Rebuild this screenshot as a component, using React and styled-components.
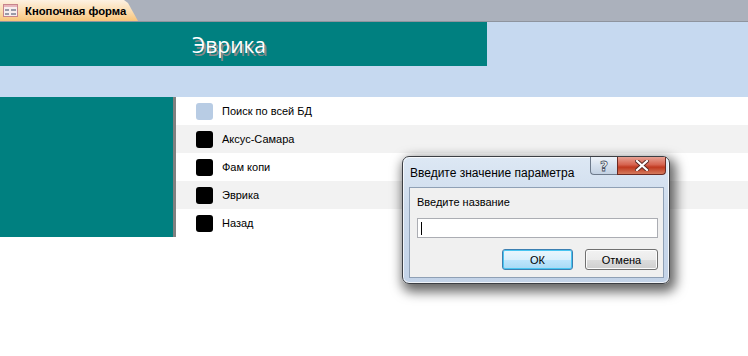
import React from 'react';
import styled, { createGlobalStyle } from 'styled-components';

const GlobalStyle = createGlobalStyle`
  html, body {
    margin: 0;
    padding: 0;
    background: #ffffff;
  }
  body {
    font-family: 'Liberation Sans', Arial, sans-serif;
    width: 748px;
    height: 356px;
    overflow: hidden;
  }
`;

const menuItems = [
  { label: 'Поиск по всей БД', light: true },
  { label: 'Аксус-Самара' },
  { label: 'Фам копи' },
  { label: 'Эврика' },
  { label: 'Назад' }
];

const FormIcon = () => (
  <svg width="15" height="13" viewBox="0 0 15 13">
    <rect x="0.5" y="0.5" width="14" height="12" fill="#f7eeee" stroke="#c8848c" />
    <rect x="1" y="1" width="13" height="2" fill="#e7b6bc" />
    <rect x="2" y="5" width="4" height="2" fill="#9a9aa8" />
    <rect x="8" y="5" width="5" height="2" fill="#9a9aa8" />
    <rect x="2" y="9" width="4" height="2" fill="#9a9aa8" />
    <rect x="8" y="9" width="5" height="2" fill="#9a9aa8" />
  </svg>
);

const App = () => {
  return (
    <Page>
      <GlobalStyle />
      <TabBar>
        <Tab>
          <FormIcon />
          <TabLabel>Кнопочная форма</TabLabel>
        </Tab>
      </TabBar>
      <HeaderArea>
        <TitleBand>
          <Title>Эврика</Title>
        </TitleBand>
        <Band />
      </HeaderArea>
      <Body>
        <SidePanel />
        <MenuList>
          {menuItems.map((item, i) => (
            <MenuRow key={item.label} $alt={i % 2 === 1}>
              <MenuButton $light={item.light} />
              <MenuText>{item.label}</MenuText>
            </MenuRow>
          ))}
        </MenuList>
      </Body>

      <Dialog>
        <DialogTitleBar>
          <DialogTitle>Введите значение параметра</DialogTitle>
          <Caption>
            <HelpButton>?</HelpButton>
            <CloseButton>
              <svg width="14" height="11" viewBox="0 0 14 11">
                <path d="M2 1 L12 10 M12 1 L2 10" stroke="#5a2a24" strokeWidth="4" strokeLinecap="square" />
                <path d="M2 1 L12 10 M12 1 L2 10" stroke="#ffffff" strokeWidth="2.2" strokeLinecap="square" />
              </svg>
            </CloseButton>
          </Caption>
        </DialogTitleBar>
        <Client>
          <Prompt>Введите название</Prompt>
          <Field>
            <Caret />
          </Field>
          <ButtonRow>
            <PushButton $focused>ОК</PushButton>
            <PushButton>Отмена</PushButton>
          </ButtonRow>
        </Client>
      </Dialog>
    </Page>
  );
};

const Page = styled.div`
  position: relative;
  width: 748px;
  height: 356px;
  display: flex;
  flex-direction: column;
`;

const TabBar = styled.div`
  height: 21px;
  background: #abb1bc;
  border-bottom: 1px solid #8e949e;
  display: flex;
  align-items: flex-end;
`;

const Tab = styled.div`
  height: 21px;
  width: 138px;
  box-sizing: border-box;
  padding-left: 3px;
  display: flex;
  align-items: center;
  gap: 7px;
  background: linear-gradient(#fdf1e2 0%, #fbdcae 55%, #f8c47a 100%);
  clip-path: polygon(0 0, 124px 0, 128px 3px, 138px 100%, 0 100%);
`;

const TabLabel = styled.span`
  font-family: 'Liberation Sans', Tahoma, sans-serif;
  font-size: 11.3px;
  font-weight: bold;
  color: #000;
  white-space: nowrap;
`;

const HeaderArea = styled.div`
  background: #c6d9f0;
  display: flex;
  flex-direction: column;
`;

const TitleBand = styled.div`
  width: 487px;
  height: 44px;
  background: #008080;
  box-sizing: border-box;
  padding-left: 192px;
  display: flex;
  align-items: center;
`;

const Title = styled.h1`
  margin: 2px 0 0 0;
  font-family: 'Open Sans', 'Noto Sans', sans-serif;
  font-weight: normal;
  font-size: 21px;
  color: #ffffff;
  text-shadow: 2px 3px 0 #8a8a8a;
`;

const Band = styled.div`
  height: 31px;
`;

const Body = styled.div`
  display: flex;
  align-items: flex-start;
`;

const SidePanel = styled.div`
  width: 173px;
  height: 140px;
  background: #008080;
  border-right: 3px solid #808080;
`;

const MenuList = styled.div`
  flex: 1;
  display: flex;
  flex-direction: column;
`;

const MenuRow = styled.div`
  height: 28px;
  display: flex;
  align-items: center;
  padding-left: 20px;
  gap: 9px;
  background: ${p => (p.$alt ? '#f2f2f2' : '#ffffff')};
`;

const MenuButton = styled.div`
  width: 17px;
  height: 17px;
  border-radius: 3px;
  background: ${p => (p.$light ? '#b8cce4' : '#000000')};
`;

const MenuText = styled.span`
  font-family: 'Liberation Sans', Tahoma, sans-serif;
  font-size: 11px;
  color: #000;
`;

const Dialog = styled.div`
  position: absolute;
  left: 402px;
  top: 156px;
  width: 268px;
  height: 128px;
  box-sizing: border-box;
  border: 1px solid #3c3f44;
  border-radius: 7px;
  background: linear-gradient(180deg, #dde8f4 0%, #cddbec 40%, #c3d3e8 100%);
  box-shadow: inset 0 0 0 1px rgba(255, 255, 255, 0.75), 3px 5px 12px 3px rgba(0, 0, 0, 0.6);
  padding: 0 5px 5px 6px;
  display: flex;
  flex-direction: column;
`;

const DialogTitleBar = styled.div`
  height: 30px;
  display: flex;
  justify-content: space-between;
  align-items: flex-start;
`;

const DialogTitle = styled.span`
  font-family: 'Liberation Sans', 'Segoe UI', sans-serif;
  font-size: 12px;
  color: #000;
  margin-top: 9px;
  margin-left: 1px;
  white-space: nowrap;
`;

const Caption = styled.div`
  display: flex;
  margin-right: -2px;
`;

const HelpButton = styled.div`
  width: 27px;
  height: 18px;
  box-sizing: border-box;
  border: 1px solid #6d7a8b;
  border-right: none;
  border-top: none;
  border-radius: 0 0 0 4px;
  background: linear-gradient(#eef3f9 0%, #d6e1ee 50%, #c3d1e2 100%);
  color: #ffffff;
  font-family: 'DejaVu Sans', sans-serif;
  font-size: 14px;
  font-weight: bold;
  text-align: center;
  line-height: 18px;
  -webkit-text-stroke: 0.8px #4b5566;
`;

const CloseButton = styled.div`
  width: 49px;
  height: 18px;
  box-sizing: border-box;
  border: 1px solid #6b2a22;
  border-top: none;
  border-radius: 0 0 4px 0;
  background: linear-gradient(#e8a294 0%, #d6634f 45%, #c0391f 60%, #d47a5c 100%);
  display: flex;
  align-items: center;
  justify-content: center;
`;

const Client = styled.div`
  flex: 1;
  background: #f0f0f0;
  border: 1px solid #8fa0b5;
  box-sizing: border-box;
  padding: 8px 5px 0 7px;
  display: flex;
  flex-direction: column;
`;

const Prompt = styled.span`
  font-family: 'Liberation Sans', Tahoma, sans-serif;
  font-size: 11px;
  color: #000;
  height: 15px;
`;

const Field = styled.div`
  margin-top: 7px;
  height: 20px;
  box-sizing: border-box;
  background: #ffffff;
  border: 1px solid #abadb3;
  display: flex;
  align-items: center;
  padding-left: 3px;
`;

const Caret = styled.div`
  width: 1px;
  height: 13px;
  background: #000;
`;

const ButtonRow = styled.div`
  margin-top: 11px;
  display: flex;
  justify-content: flex-end;
  gap: 12px;
`;

const PushButton = styled.div`
  width: ${p => (p.$focused ? '71px' : '73px')};
  height: 21px;
  box-sizing: border-box;
  border: 1px solid ${p => (p.$focused ? '#3c7fb1' : '#707070')};
  border-radius: 3px;
  background: ${p => (p.$focused
    ? 'linear-gradient(#eaf6fd 0%, #d9f0fc 50%, #bee6fd 51%, #a7d9f5 100%)'
    : 'linear-gradient(#f2f2f2 0%, #ebebeb 50%, #dddddd 51%, #cfcfcf 100%)')};
  box-shadow: ${p => (p.$focused ? 'inset 0 0 0 1px #48c5f1' : 'inset 0 0 0 1px #fcfcfc')};
  font-family: 'Liberation Sans', Tahoma, sans-serif;
  font-size: 11px;
  color: #000;
  display: flex;
  align-items: center;
  justify-content: center;
`;

export default App;
